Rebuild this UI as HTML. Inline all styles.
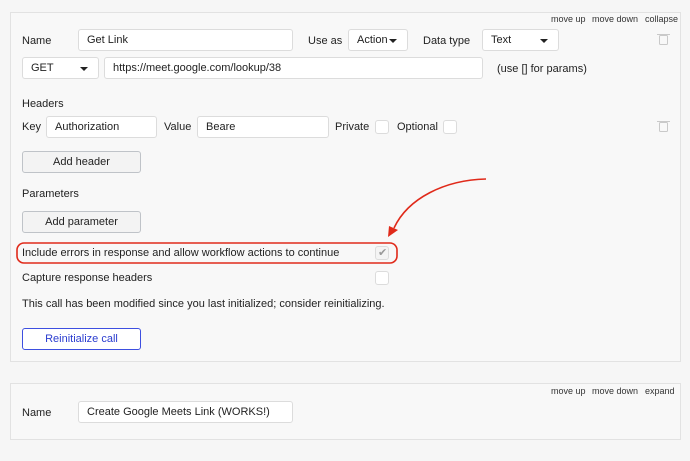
<!DOCTYPE html>
<html><head><meta charset="utf-8"><style>
*{box-sizing:border-box}
body{margin:0;width:690px;height:461px;background:#f6f6f6;font-family:"Liberation Sans",sans-serif;font-size:11px;color:#222;position:relative;overflow:hidden}
.p{position:absolute;border:1px solid #e2e2e2;background:#f8f8f8}
.a{position:absolute;white-space:nowrap}
.i{position:absolute;background:#fff;border:1px solid #dcdcdc;border-radius:3px;padding:0 8px;line-height:20px;white-space:nowrap;overflow:hidden}
.s::after{content:"";position:absolute;right:10px;top:9px;border-left:4px solid transparent;border-right:4px solid transparent;border-top:4px solid #222}
.b{position:absolute;background:#f3f3f3;border:1px solid #bfc3c8;border-radius:3px;text-align:center;line-height:20px}
.c{position:absolute;width:14px;height:14px;background:#fff;border:1px solid #dcdcdc;border-radius:3px}
.sm{font-size:9px;color:#333}
</style></head><body>
<div class="p" style="left:10px;top:12px;width:671px;height:350px"></div>
<div class="p" style="left:10px;top:383px;width:671px;height:57px"></div>

<div class="a sm" style="left:551px;top:14px">move up</div>
<div class="a sm" style="left:592px;top:14px">move down</div>
<div class="a sm" style="left:645px;top:14px">collapse</div>

<div class="a" style="left:22px;top:35px">Name</div>
<div class="i" style="left:78px;top:29px;width:215px;height:22px">Get Link</div>
<div class="a" style="left:308px;top:35px">Use as</div>
<div class="i s" style="left:348px;top:29px;width:60px;height:22px">Action</div>
<div class="a" style="left:423px;top:35px">Data type</div>
<div class="i s" style="left:482px;top:29px;width:77px;height:22px">Text</div>

<div class="i s" style="left:22px;top:57px;width:77px;height:22px">GET</div>
<div class="i" style="left:104px;top:57px;width:379px;height:22px">https://meet.google.com/lookup/38</div>
<div class="a" style="left:497px;top:63px">(use [] for params)</div>

<div class="a" style="left:22px;top:98px">Headers</div>
<div class="a" style="left:22px;top:121px">Key</div>
<div class="i" style="left:46px;top:116px;width:111px;height:22px">Authorization</div>
<div class="a" style="left:164px;top:121px">Value</div>
<div class="i" style="left:197px;top:116px;width:132px;height:22px">Beare</div>
<div class="a" style="left:335px;top:121px">Private</div>
<div class="c" style="left:375px;top:120px"></div>
<div class="a" style="left:397px;top:121px">Optional</div>
<div class="c" style="left:443px;top:120px"></div>

<div class="b" style="left:22px;top:151px;width:119px;height:22px">Add header</div>
<div class="a" style="left:22px;top:188px">Parameters</div>
<div class="b" style="left:22px;top:211px;width:119px;height:22px">Add parameter</div>

<div class="a" style="left:22px;top:247px">Include errors in response and allow workflow actions to continue</div>
<div class="c" style="left:375px;top:246px;background:#f4f4f4"></div>
<div class="a" style="left:378px;top:246px;color:#999;font-size:11px">✔</div>
<div class="a" style="left:22px;top:272px">Capture response headers</div>
<div class="c" style="left:375px;top:271px"></div>
<div class="a" style="left:22px;top:298px">This call has been modified since you last initialized; consider reinitializing.</div>
<div class="b" style="left:22px;top:328px;width:119px;height:22px;background:#fff;border-color:#3d4fe0;color:#2a3ccf">Reinitialize call</div>

<div class="a sm" style="left:551px;top:386px">move up</div>
<div class="a sm" style="left:592px;top:386px">move down</div>
<div class="a sm" style="left:645px;top:386px">expand</div>
<div class="a" style="left:22px;top:407px">Name</div>
<div class="i" style="left:78px;top:401px;width:215px;height:22px">Create Google Meets Link (WORKS!)</div>

<svg width="690" height="461" style="position:absolute;left:0;top:0">
<g fill="none" stroke="#c9c9c9" stroke-width="1">
<rect x="659.5" y="35.5" width="8" height="9" rx="1"/><line x1="657" y1="34.5" x2="670" y2="34.5"/>
<rect x="659.5" y="122.5" width="8" height="9" rx="1"/><line x1="657" y1="121.5" x2="670" y2="121.5"/>
</g>
<rect x="17" y="243" width="380" height="20" rx="7" fill="none" stroke="#e02a1a" stroke-width="1.6"/>
<path d="M486 179 C445 180 408 198 394 228" fill="none" stroke="#e02a1a" stroke-width="1.6"/>
<polygon points="388,237 389,226 398,230" fill="#e02a1a"/>
</svg>
</body></html>
